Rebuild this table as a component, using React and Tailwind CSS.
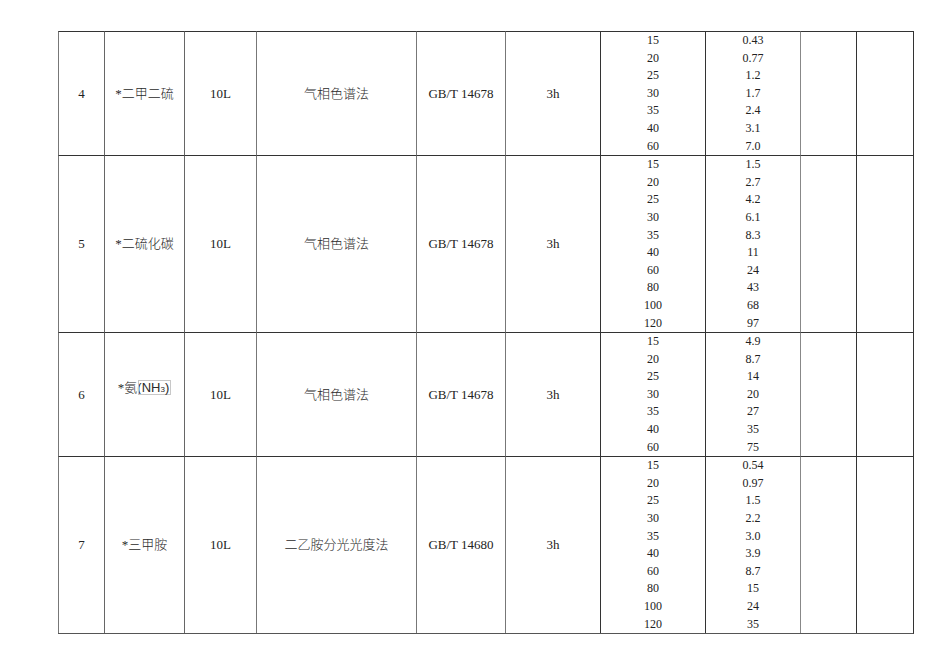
const rows = [
  {
    no: "4",
    name: "*二甲二硫",
    volume: "10L",
    method: "气相色谱法",
    standard: "GB/T 14678",
    time: "3h",
    heights: ["15", "20", "25", "30", "35", "40", "60"],
    limits: ["0.43", "0.77", "1.2", "1.7", "2.4", "3.1", "7.0"],
  },
  {
    no: "5",
    name: "*二硫化碳",
    volume: "10L",
    method: "气相色谱法",
    standard: "GB/T 14678",
    time: "3h",
    heights: ["15", "20", "25", "30", "35", "40", "60", "80", "100", "120"],
    limits: ["1.5", "2.7", "4.2", "6.1", "8.3", "11", "24", "43", "68", "97"],
  },
  {
    no: "6",
    name: "ammonia",
    volume: "10L",
    method: "气相色谱法",
    standard: "GB/T 14678",
    time: "3h",
    heights: ["15", "20", "25", "30", "35", "40", "60"],
    limits: ["4.9", "8.7", "14", "20", "27", "35", "75"],
  },
  {
    no: "7",
    name: "*三甲胺",
    volume: "10L",
    method: "二乙胺分光光度法",
    standard: "GB/T 14680",
    time: "3h",
    heights: ["15", "20", "25", "30", "35", "40", "60", "80", "100", "120"],
    limits: ["0.54", "0.97", "1.5", "2.2", "3.0", "3.9", "8.7", "15", "24", "35"],
  },
];

const cjk =
  "[font-family:'Liberation_Serif','Noto_Sans_CJK_SC',serif] font-light text-[13px] text-[#2a2a2a]";
const sans = "[font-family:'Liberation_Sans',Arial,sans-serif]";

function Name({ value }) {
  if (value === "ammonia") {
    return (
      <span className="relative -top-[7px] inline-flex items-center">
        <span className={cjk}>*氨</span>
        <span className={`${sans} text-[13px] text-[#2a2a2a]`}>(</span>
        <span
          className={`${sans} -ml-[4px] inline-flex h-[15px] items-start border border-[#c8c8c8] pl-[3px] pr-[1px] text-[13px] leading-[14px] text-[#2a2a2a]`}
        >
          NH<span className="mt-[5px] text-[8px] leading-[8px]">3</span>)
        </span>
      </span>
    );
  }
  return <span className={cjk}>{value}</span>;
}

export default function App() {
  return (
    <div className="min-h-[672px] w-[950px] bg-white pl-[58px] pt-[31px] [font-family:'Liberation_Serif','Noto_Sans_CJK_SC',serif] text-[12px] text-[#222]">
      <table className="w-[855px] table-fixed border-separate border-spacing-0 border-r border-b border-r-[#333] border-b-[#555]">
        <colgroup>
          <col className="w-[46px]" />
          <col className="w-[80px]" />
          <col className="w-[72px]" />
          <col className="w-[160px]" />
          <col className="w-[89px]" />
          <col className="w-[95px]" />
          <col className="w-[105px]" />
          <col className="w-[95px]" />
          <col className="w-[56px]" />
          <col className="w-[57px]" />
        </colgroup>
        <tbody>
          {rows.map((r) => (
            <tr key={r.no}>
              <td className="border-t border-l border-t-[#333] border-l-[#777] text-center align-middle text-[13px]">{r.no}</td>
              <td className="border-t border-l border-t-[#333] border-l-[#666] text-center align-middle">
                <Name value={r.name} />
              </td>
              <td className="border-t border-l border-t-[#333] border-l-[#666] text-center align-middle text-[13px]">{r.volume}</td>
              <td className="border-t border-l border-t-[#333] border-l-[#777] text-center align-middle">
                <span className={cjk}>{r.method}</span>
              </td>
              <td className="border-t border-l border-t-[#333] border-l-[#777] text-center align-middle text-[13px]">{r.standard}</td>
              <td className="border-t border-l border-t-[#333] border-l-[#777] text-center align-middle text-[13px]">{r.time}</td>
              <td className="border-t border-l border-t-[#333] border-l-[#333] text-center align-top">
                {r.heights.map((h, i) => (
                  <div key={i} className="h-[17.6px] leading-[17.6px]">{h}</div>
                ))}
              </td>
              <td className="border-t border-l border-t-[#333] border-l-[#333] text-center align-top">
                {r.limits.map((v, i) => (
                  <div key={i} className="h-[17.6px] leading-[17.6px]">{v}</div>
                ))}
              </td>
              <td className="border-t border-l border-t-[#333] border-l-[#888]"></td>
              <td className="border-t border-l border-t-[#333] border-l-[#333]"></td>
            </tr>
          ))}
        </tbody>
      </table>
    </div>
  );
}
